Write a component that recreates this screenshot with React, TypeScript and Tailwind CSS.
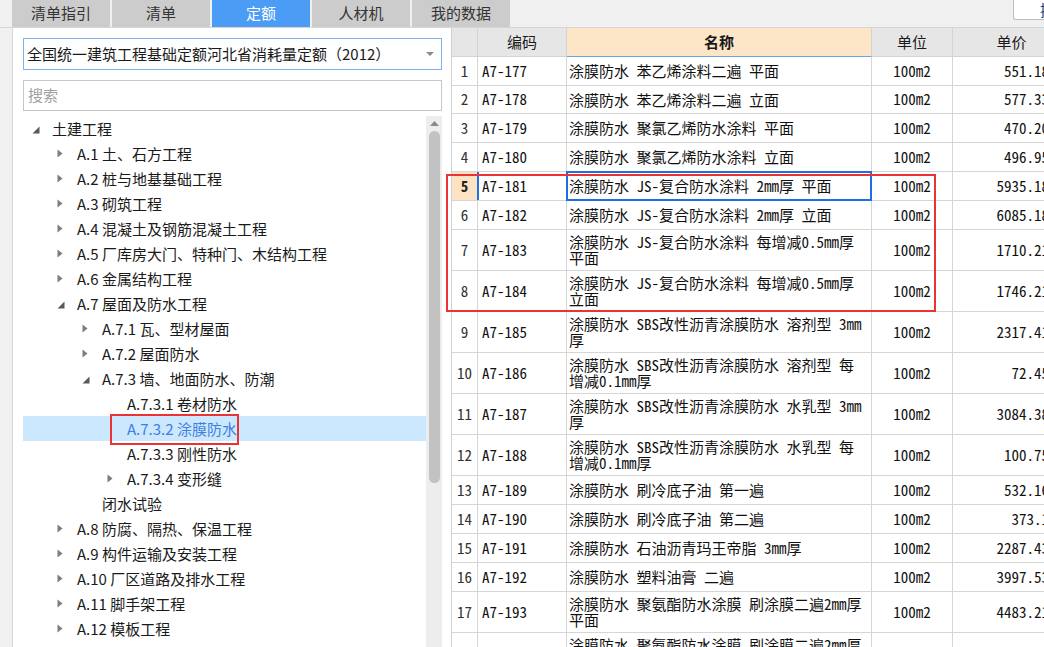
import React from 'react';

type TreeState = 'open' | 'closed' | 'leaf';

type TreeNode = {
  label: string;
  level: number;
  state: TreeState;
  selected?: boolean;
};

type QuotaRow = {
  no: number;
  code: string;
  name: string[];
  unit: string;
  price: string;
  h: string;
};

const TABS = ['清单指引', '清单', '定额', '人材机', '我的数据'];
const ACTIVE_TAB = '定额';

const TREE: TreeNode[] = [
  { label: '土建工程', level: 0, state: 'open' },
  { label: 'A.1 土、石方工程', level: 1, state: 'closed' },
  { label: 'A.2 桩与地基基础工程', level: 1, state: 'closed' },
  { label: 'A.3 砌筑工程', level: 1, state: 'closed' },
  { label: 'A.4 混凝土及钢筋混凝土工程', level: 1, state: 'closed' },
  { label: 'A.5 厂库房大门、特种门、木结构工程', level: 1, state: 'closed' },
  { label: 'A.6 金属结构工程', level: 1, state: 'closed' },
  { label: 'A.7 屋面及防水工程', level: 1, state: 'open' },
  { label: 'A.7.1 瓦、型材屋面', level: 2, state: 'closed' },
  { label: 'A.7.2 屋面防水', level: 2, state: 'closed' },
  { label: 'A.7.3 墙、地面防水、防潮', level: 2, state: 'open' },
  { label: 'A.7.3.1 卷材防水', level: 3, state: 'leaf' },
  { label: 'A.7.3.2 涂膜防水', level: 3, state: 'leaf', selected: true },
  { label: 'A.7.3.3 刚性防水', level: 3, state: 'leaf' },
  { label: 'A.7.3.4 变形缝', level: 3, state: 'closed' },
  { label: '闭水试验', level: 2, state: 'leaf' },
  { label: 'A.8 防腐、隔热、保温工程', level: 1, state: 'closed' },
  { label: 'A.9 构件运输及安装工程', level: 1, state: 'closed' },
  { label: 'A.10 厂区道路及排水工程', level: 1, state: 'closed' },
  { label: 'A.11 脚手架工程', level: 1, state: 'closed' },
  { label: 'A.12 模板工程', level: 1, state: 'closed' },
  { label: '建筑物超高增加费', level: 3, state: 'leaf' },
];

const INDENT = ['pl-[9px]', 'pl-[34px]', 'pl-[59px]', 'pl-[84px]'];

const ROWS: QuotaRow[] = [
  { no: 1, code: 'A7-177', name: ['涂膜防水 苯乙烯涂料二遍 平面'], unit: '100m2', price: '551.18', h: 'h-[29px]' },
  { no: 2, code: 'A7-178', name: ['涂膜防水 苯乙烯涂料二遍 立面'], unit: '100m2', price: '577.33', h: 'h-[28px]' },
  { no: 3, code: 'A7-179', name: ['涂膜防水 聚氯乙烯防水涂料 平面'], unit: '100m2', price: '470.20', h: 'h-[29px]' },
  { no: 4, code: 'A7-180', name: ['涂膜防水 聚氯乙烯防水涂料 立面'], unit: '100m2', price: '496.95', h: 'h-[29px]' },
  { no: 5, code: 'A7-181', name: ['涂膜防水 JS-复合防水涂料 2mm厚 平面'], unit: '100m2', price: '5935.18', h: 'h-[29px]' },
  { no: 6, code: 'A7-182', name: ['涂膜防水 JS-复合防水涂料 2mm厚 立面'], unit: '100m2', price: '6085.18', h: 'h-[29px]' },
  { no: 7, code: 'A7-183', name: ['涂膜防水 JS-复合防水涂料 每增减0.5mm厚', '平面'], unit: '100m2', price: '1710.21', h: 'h-[41px]' },
  { no: 8, code: 'A7-184', name: ['涂膜防水 JS-复合防水涂料 每增减0.5mm厚', '立面'], unit: '100m2', price: '1746.21', h: 'h-[41px]' },
  { no: 9, code: 'A7-185', name: ['涂膜防水 SBS改性沥青涂膜防水 溶剂型 3mm', '厚'], unit: '100m2', price: '2317.41', h: 'h-[41px]' },
  { no: 10, code: 'A7-186', name: ['涂膜防水 SBS改性沥青涂膜防水 溶剂型 每', '增减0.1mm厚'], unit: '100m2', price: '72.45', h: 'h-[41px]' },
  { no: 11, code: 'A7-187', name: ['涂膜防水 SBS改性沥青涂膜防水 水乳型 3mm', '厚'], unit: '100m2', price: '3084.38', h: 'h-[41px]' },
  { no: 12, code: 'A7-188', name: ['涂膜防水 SBS改性沥青涂膜防水 水乳型 每', '增减0.1mm厚'], unit: '100m2', price: '100.75', h: 'h-[41px]' },
  { no: 13, code: 'A7-189', name: ['涂膜防水 刷冷底子油 第一遍'], unit: '100m2', price: '532.16', h: 'h-[29px]' },
  { no: 14, code: 'A7-190', name: ['涂膜防水 刷冷底子油 第二遍'], unit: '100m2', price: '373.1', h: 'h-[29px]' },
  { no: 15, code: 'A7-191', name: ['涂膜防水 石油沥青玛王帝脂 3mm厚'], unit: '100m2', price: '2287.43', h: 'h-[29px]' },
  { no: 16, code: 'A7-192', name: ['涂膜防水 塑料油膏 二遍'], unit: '100m2', price: '3997.53', h: 'h-[29px]' },
  { no: 17, code: 'A7-193', name: ['涂膜防水 聚氨酯防水涂膜 刷涂膜二遍2mm厚', '平面'], unit: '100m2', price: '4483.21', h: 'h-[41px]' },
  { no: 18, code: 'A7-194', name: ['涂膜防水 聚氨酯防水涂膜 刷涂膜二遍2mm厚', '立面'], unit: '100m2', price: '4495.10', h: 'h-[41px]' },
];

const SELECTED_ROW = 5;

const COLS = 'grid grid-cols-[26px_89px_305px_81px_118px]';

function Caret({ state }: { state: TreeState }) {
  if (state === 'open') {
    return (
      <svg width="8" height="8" viewBox="0 0 8 8" className="mt-[2px]">
        <path d="M7.5 0.5 L7.5 7.5 L0.5 7.5 Z" fill="#595959" />
      </svg>
    );
  }
  if (state === 'closed') {
    return (
      <svg width="6" height="9" viewBox="0 0 6 9">
        <path d="M0.5 0.5 L5.5 4.5 L0.5 8.5 Z" fill="#7d7d7d" />
      </svg>
    );
  }
  return null;
}

function TreeRow({ node }: { node: TreeNode }) {
  return (
    <div
      className={`h-[25px] flex items-center ${INDENT[node.level]} ${
        node.selected ? 'bg-[#cce8ff] text-[#3c7fe0]' : 'text-[#1a1a1a]'
      }`}
    >
      <span className="w-[20px] shrink-0 flex items-center">
        <Caret state={node.state} />
      </span>
      <span className="text-[15px] whitespace-nowrap leading-none">{node.label}</span>
    </div>
  );
}

function Scrollbar() {
  return (
    <div className="w-[16px] shrink-0 bg-[#ededed] flex flex-col items-center">
      <div className="h-[14px] w-full flex items-center justify-center">
        <svg width="9" height="5" viewBox="0 0 9 5">
          <path d="M0 5 L4.5 0 L9 5 Z" fill="#8a8a8a" />
        </svg>
      </div>
      <div className="mt-[1px] w-[11px] h-[352px] rounded-full bg-[#c2c2c2]" />
    </div>
  );
}

function LeftPanel() {
  return (
    <div className="ml-[12px] w-[439px] shrink-0 bg-white border-l border-[#d6d6d6] flex flex-col pl-[10px] pr-[9px] pt-[10px] font-['Noto_Sans_CJK_SC',sans-serif]">
      <div className="h-[32px] w-[419px] border border-[#7fb4ea] flex items-center pl-[3px] pr-[7px]">
        <span className="text-[15px] text-[#1a1a1a] whitespace-nowrap">全国统一建筑工程基础定额河北省消耗量定额（2012）</span>
        <svg width="8" height="4" viewBox="0 0 8 4" className="ml-auto">
          <path d="M0 0 L8 0 L4 4 Z" fill="#8c8c8c" />
        </svg>
      </div>
      <div className="mt-[10px] h-[31px] w-[419px] border border-[#c6c6c6] flex items-center pl-[4px]">
        <span className="text-[15px] text-[#a0a0a0]">搜索</span>
      </div>
      <div className="mt-[5px] flex flex-1 min-h-0">
        <div className="w-[403px] shrink-0 overflow-hidden">
          {TREE.map((n) => (
            <TreeRow key={n.label} node={n} />
          ))}
        </div>
        <Scrollbar />
      </div>
    </div>
  );
}

function HeaderRow() {
  const cell = 'h-full flex items-center justify-center border-r border-b border-[#d3d3d3] bg-[#e6e6e6]';
  return (
    <div className={`${COLS} h-[29px] font-['Noto_Sans_CJK_SC',sans-serif] text-[15px] text-[#1a1a1a]`}>
      <div className={cell} />
      <div className={cell}>编码</div>
      <div className="h-full flex items-center justify-center border-r border-[#d3d3d3] border-b border-b-[#6aa3e6] bg-[#fde6c8] font-bold">
        名称
      </div>
      <div className={cell}>单位</div>
      <div className={cell}>单价</div>
    </div>
  );
}

function DataRow({ row }: { row: QuotaRow }) {
  const sel = row.no === SELECTED_ROW;
  const cell = 'h-full flex items-center border-r border-b border-[#d6d6d6]';
  return (
    <div className={`${COLS} ${row.h}`}>
      <div className={`${cell} justify-center ${sel ? 'bg-[#fde3c3] font-bold text-[#222]' : 'text-[#333]'}`}>{row.no}</div>
      <div className={`${cell} relative pl-[4px]`}>
        {sel && <div className="absolute -left-px top-0 bottom-0 w-[2px] bg-[#1f6fe0]" />}
        {row.code}
      </div>
      <div className={`${cell} relative pl-[2px]`}>
        {sel && <div className="absolute -left-px -top-px -right-px -bottom-px border-2 border-[#1f6fe0]" />}
        <div className="flex flex-col leading-[16px] whitespace-nowrap">
          {row.name.map((line, i) => (
            <span key={i}>{line}</span>
          ))}
        </div>
      </div>
      <div className={`${cell} justify-center`}>{row.unit}</div>
      <div className={`${cell} justify-end pr-[21px]`}>{row.price}</div>
    </div>
  );
}

export default function App() {
  return (
    <div className="relative w-[1044px] h-[647px] overflow-hidden bg-[#f0f0f0] flex flex-col">
      <div className="h-[28px] shrink-0 flex border-b border-[#d6d6d6] pl-[12px] font-['Noto_Sans_CJK_SC',sans-serif]">
        <div className="flex gap-[2px] h-[27px]">
          {TABS.map((t) => (
            <div
              key={t}
              className={`w-[98px] flex items-center justify-center text-[15px] ${
                t === ACTIVE_TAB ? 'bg-[#4a9cf5] text-white' : 'bg-[#cccccc] text-[#333]'
              }`}
            >
              {t}
            </div>
          ))}
        </div>
        <div className="ml-auto w-[31px] h-[20px] bg-white border-l border-b border-[#bdbdbd] rounded-bl-[3px] overflow-hidden pl-[26px] text-[15px] leading-[20px] text-[#1d3b78] whitespace-nowrap">
          插入
        </div>
      </div>

      <div className="flex flex-1 min-h-0">
        <LeftPanel />
        <div className="flex-1 min-w-0 bg-white border-l border-[#cfcfcf] overflow-hidden font-['Noto_Sans_Mono_CJK_SC','DejaVu_Sans_Mono','Noto_Sans_CJK_SC',monospace] text-[15px] text-[#111]">
          <HeaderRow />
          {ROWS.map((r) => (
            <DataRow key={r.no} row={r} />
          ))}
        </div>
      </div>

      {/* annotation boxes drawn over the screenshot */}
      <div className="absolute left-[110px] top-[414px] w-[129px] h-[31px] border-2 border-[#ea3434]" />
      <div className="absolute left-[446px] top-[174px] w-[490px] h-[138px] border-2 border-[#ea3434]" />
    </div>
  );
}
